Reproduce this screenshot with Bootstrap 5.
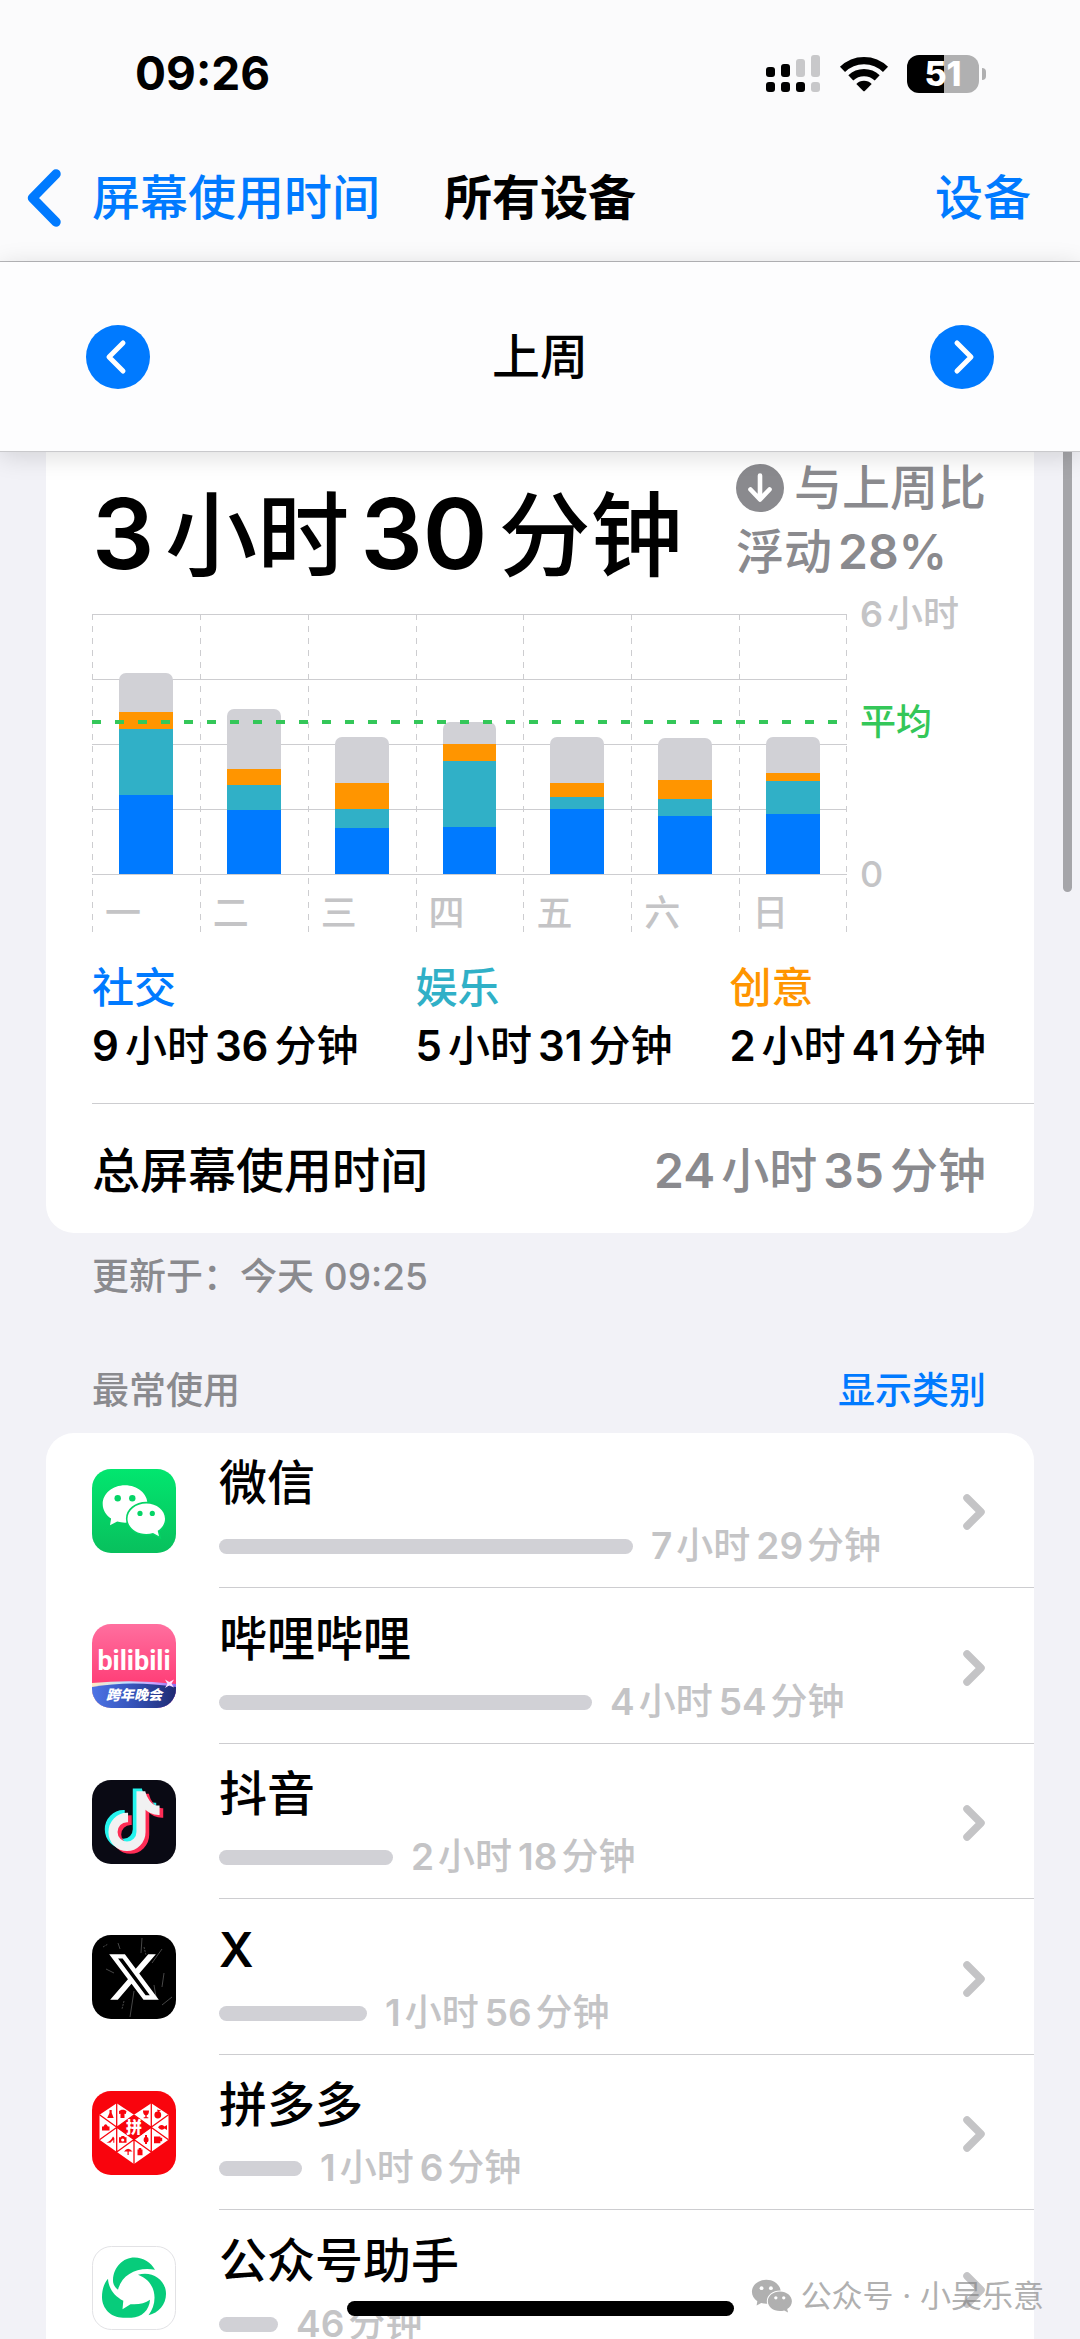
<!DOCTYPE html>
<html lang="zh-CN">

<head>
    <meta charset="UTF-8">
    <meta name="viewport" content="width=device-width, initial-scale=1.0">
    <title>屏幕使用时间</title>
    <link rel="stylesheet" href="https://cdn.jsdelivr.net/npm/bootstrap@5.3.3/dist/css/bootstrap.min.css">
    <script src="https://cdn.jsdelivr.net/npm/bootstrap@5.3.3/dist/js/bootstrap.bundle.min.js"></script>
    <style>
        :root {
            --ios-blue: #007aff;
            --ios-teal: #30b0c7;
            --ios-orange: #ff9500;
            --ios-green: #34c759;
            --ios-gray: #8a8a8e;
            --ios-light: #c4c4c6;
            --ios-fill: #d1d1d6;
            --ios-line: #cdcdd0;
        }

        body {
            background: #f2f2f7;
            color: #000;
            font-family: Inter, "Noto Sans CJK SC", sans-serif;
            font-weight: 500;
        }

        a {
            text-decoration: none;
        }

        svg {
            display: block;
            flex: none;
        }

        .screen {
            height: 100vh;
        }

        .text-ios {
            color: var(--ios-blue);
        }

        .text-gray {
            color: var(--ios-gray);
        }

        /* space between digits and Chinese characters */
        .num {
            margin: 0 6px;
            font-weight: 600;
        }

        .num:first-child {
            margin-left: 0;
        }

        /* header */
        .top-area {
            background: #fbfbfc;
            border-bottom: 1px solid #b8b8bb;
        }

        .status-row {
            padding: 45px 94px 0 135px;
        }

        .clock {
            font-size: 46px;
            line-height: 57px;
            font-weight: 700;
        }

        .wifi {
            margin: 0 18px;
        }

        .battery {
            width: 72px;
            border-radius: 12px;
            background: linear-gradient(to right, #000 37px, #b0b0b1 37px);
            color: #fff;
            font-size: 34px;
            line-height: 38px;
            font-weight: 800;
            text-align: center;
        }

        .battery-tip {
            width: 4px;
            height: 12px;
            margin-left: 3px;
            border-radius: 0 4px 4px 0;
            background: #b0b0b1;
        }

        .nav-row {
            display: grid;
            grid-template-columns: 1fr auto 1fr;
            padding: 64px 49px 31px 27px;
            font-size: 48px;
            line-height: 64px;
        }

        .nav-row h1 {
            font-size: 48px;
            line-height: 64px;
            font-weight: 700;
            margin-right: -22px;
        }

        .back-link {
            gap: 31px;
        }

        .week-row {
            background: #fdfdfe;
            border-bottom: 1px solid #c9c9cc;
            padding: 63px 86px 62px;
            font-size: 48px;
            line-height: 64px;
            box-shadow: 0 4px 24px rgba(0, 0, 0, .14);
        }

        .round-btn {
            width: 64px;
            height: 64px;
            background: var(--ios-blue);
        }

        /* summary card */
        .panel {
            margin: 0 46px;
            background: #fff;
        }

        .summary {
            border-radius: 0 0 28px 28px;
            padding: 4px 0 0 46px;
        }

        .summary-body {
            padding-right: 48px;
        }

        .total {
            font-size: 92px;
            line-height: 96px;
        }

        .total .num {
            font-size: 98px;
            margin: 0 11px;
        }

        .total .num:first-child {
            margin-left: 0;
        }

        .compare {
            font-size: 48px;
            line-height: 64px;
        }

        .compare-head {
            gap: 10px;
        }

        /* chart */
        .chart {
            margin-top: 30px;
            font-size: 36px;
            line-height: 36px;
            color: var(--ios-light);
        }

        .chart .num,
        .usage .num {
            margin-right: 4px;
        }

        .plot {
            background: repeating-linear-gradient(to bottom, var(--ios-line) 0 1px, transparent 1px 65px) 0 0 / 100% 261px no-repeat;
        }

        .day {
            background: repeating-linear-gradient(to bottom, var(--ios-line) 0 6px, transparent 6px 12px) 0 0 / 1px 100% no-repeat;
        }

        .day:last-of-type {
            background: repeating-linear-gradient(to bottom, var(--ios-line) 0 6px, transparent 6px 12px) 0 0 / 1px 100% no-repeat,
                repeating-linear-gradient(to bottom, var(--ios-line) 0 6px, transparent 6px 12px) 100% 0 / 1px 100% no-repeat;
        }

        .bars {
            height: 260px;
        }

        .stack {
            width: 50%;
            border-radius: 7px 7px 0 0;
        }

        .fill-other {
            background: var(--ios-fill);
        }

        .fill-create {
            background: var(--ios-orange);
        }

        .fill-fun {
            background: var(--ios-teal);
        }

        .fill-social {
            background: var(--ios-blue);
        }

        .day-name {
            padding: 21px 0 1px 13px;
        }

        .avg-line {
            position: absolute;
            left: 0;
            right: 0;
            top: 106px;
            height: 4px;
            background: repeating-linear-gradient(to right, var(--ios-green) 0 9px, transparent 9px 23px);
        }

        .axis {
            width: 139px;
            padding-left: 13px;
            margin-top: -18px;
        }

        .axis-avg {
            margin-top: 72px;
            color: var(--ios-green);
        }

        .axis-zero {
            margin-top: 116px;
        }

        .legend-row {
            margin-top: 27px;
            padding-bottom: 28px;
            font-size: 42px;
            line-height: 58px;
        }

        .sum-row {
            border-top: 1px solid var(--ios-line);
            padding: 35px 48px 30px 0;
            font-size: 48px;
            line-height: 64px;
        }

        .caption {
            padding: 0 94px 0 92px;
            font-size: 37px;
            line-height: 48px;
        }

        .updated {
            margin: 20px 0 66px;
        }

        .caption h2 {
            font-size: 37px;
            line-height: 48px;
        }

        /* app list */
        .app-list {
            margin-top: 18px;
            border-radius: 28px 28px 0 0;
        }

        .app-item {
            padding-left: 46px;
            gap: 43px;
            color: #000;
        }

        .app-body {
            border-bottom: 1px solid var(--ios-line);
            padding: 22px 48px 17px 0;
        }

        .app-item:nth-child(even) .app-body {
            padding-top: 23px;
        }

        .app-name {
            font-size: 48px;
            line-height: 56px;
        }

        .usage {
            margin-top: 11px;
            gap: 18px;
            font-size: 37px;
            line-height: 48px;
            color: var(--ios-light);
        }

        .usage-bar {
            height: 15px;
            border-radius: 8px;
            background: var(--ios-fill);
        }

        /* overlays */
        .scroll-thumb {
            position: absolute;
            right: 8px;
            top: 452px;
            width: 9px;
            height: 440px;
            border-radius: 0 0 5px 5px;
            background: #a5a5a9;
        }

        .home-bar {
            position: absolute;
            left: 50%;
            bottom: 23px;
            width: 387px;
            height: 15px;
            margin-left: -193px;
            border-radius: 8px;
            background: #000;
        }

        .watermark {
            position: absolute;
            right: 36px;
            bottom: 23px;
            gap: 8px;
            font-size: 31px;
            line-height: 40px;
            font-weight: 400;
            color: #808080;
            opacity: .62;
        }
    </style>
</head>

<body>
    <div class="screen position-relative overflow-hidden">

        <header class="position-relative z-1">
            <div class="top-area">
                <div class="status-row d-flex align-items-center justify-content-between">
                    <span class="clock">09:26</span>
                    <div class="d-flex align-items-center">
                        <svg width="55" height="37" viewBox="0 0 55 37">
                            <rect x="0" y="12" width="9" height="10" rx="3" />
                            <rect x="15" y="9" width="9" height="13" rx="3" />
                            <rect x="30" y="4" width="9" height="18" rx="3" fill="#c8c8ca" />
                            <rect x="45" y="0" width="9" height="22" rx="3" fill="#c8c8ca" />
                            <rect x="0" y="27" width="9" height="10" rx="3" />
                            <rect x="15" y="27" width="9" height="10" rx="3" />
                            <rect x="30" y="27" width="9" height="10" rx="3" />
                            <rect x="45" y="27" width="9" height="10" rx="3" fill="#c8c8ca" />
                        </svg>
                        <svg class="wifi" width="50" height="36" viewBox="0 0 50 36">
                            <g fill="none" stroke="#000" stroke-width="7.200">
                                <path d="M3.500 13.400A30.500 30.500 0 0 1 46.500 13.400" />
                                <path d="M11.800 21.800A19.200 19.200 0 0 1 38.200 21.800" />
                            </g>
                            <path d="M17.300 28A10.900 10.900 0 0 1 32.700 28L26 34.800Q25 35.800 24 34.800Z" />
                        </svg>
                        <div class="battery">51</div>
                        <div class="battery-tip"></div>
                    </div>
                </div>
                <nav class="nav-row align-items-center">
                    <a href="#" class="back-link text-ios d-flex align-items-center">
                        <svg width="34" height="58" viewBox="0 0 34 58">
                            <path d="M29 5L5.500 29L29 53" fill="none" stroke="#007aff" stroke-width="9.500" stroke-linecap="round" stroke-linejoin="round" />
                        </svg>
                        <span class="text-nowrap">屏幕使用时间</span>
                    </a>
                    <h1 class="mb-0">所有设备</h1>
                    <a href="#" class="text-ios text-end">设备</a>
                </nav>
            </div>
            <div class="week-row d-flex justify-content-between align-items-center">
                <button type="button" class="round-btn btn p-0 border-0 rounded-circle" aria-label="上一周">
                    <svg width="64" height="64" viewBox="0 0 64 64">
                        <path d="M37 18L23 32L37 46" fill="none" stroke="#fff" stroke-width="5" stroke-linecap="round" stroke-linejoin="round" />
                    </svg>
                </button>
                <span>上周</span>
                <button type="button" class="round-btn btn p-0 border-0 rounded-circle" aria-label="下一周">
                    <svg width="64" height="64" viewBox="0 0 64 64">
                        <path d="M27 18L41 32L27 46" fill="none" stroke="#fff" stroke-width="5" stroke-linecap="round" stroke-linejoin="round" />
                    </svg>
                </button>
            </div>
        </header>

        <main>
            <section class="panel summary">
                <div class="summary-body">
                    <div class="d-flex justify-content-between align-items-end">
                        <div class="total text-nowrap"><span class="num">3</span>小时<span class="num">30</span>分钟</div>
                        <div class="compare text-gray text-nowrap">
                            <div class="compare-head d-flex align-items-center">
                                <svg width="48" height="48" viewBox="0 0 48 48">
                                    <circle cx="24" cy="24" r="24" fill="#8a8a8e" />
                                    <path d="M24 11.500V34M14.500 25.500L24 35.500L33.500 25.500" fill="none" stroke="#fff" stroke-width="4.600" stroke-linecap="round" stroke-linejoin="round" />
                                </svg>
                                <span>与上周比</span>
                            </div>
                            <div><span>浮动</span><span class="num">28%</span></div>
                        </div>
                    </div>

                    <div class="chart d-flex">
                        <div class="plot position-relative flex-grow-1 d-flex">
                            <div class="day flex-fill">
                                <div class="bars d-flex align-items-end justify-content-center">
                                    <div class="stack overflow-hidden">
                                        <div class="fill-other" style="height: 39px"></div>
                                        <div class="fill-create" style="height: 17px"></div>
                                        <div class="fill-fun" style="height: 66px"></div>
                                        <div class="fill-social" style="height: 79px"></div>
                                    </div>
                                </div>
                                <div class="day-name">一</div>
                            </div>
                            <div class="day flex-fill">
                                <div class="bars d-flex align-items-end justify-content-center">
                                    <div class="stack overflow-hidden">
                                        <div class="fill-other" style="height: 60px"></div>
                                        <div class="fill-create" style="height: 16px"></div>
                                        <div class="fill-fun" style="height: 25px"></div>
                                        <div class="fill-social" style="height: 64px"></div>
                                    </div>
                                </div>
                                <div class="day-name">二</div>
                            </div>
                            <div class="day flex-fill">
                                <div class="bars d-flex align-items-end justify-content-center">
                                    <div class="stack overflow-hidden">
                                        <div class="fill-other" style="height: 46px"></div>
                                        <div class="fill-create" style="height: 26px"></div>
                                        <div class="fill-fun" style="height: 19px"></div>
                                        <div class="fill-social" style="height: 46px"></div>
                                    </div>
                                </div>
                                <div class="day-name">三</div>
                            </div>
                            <div class="day flex-fill">
                                <div class="bars d-flex align-items-end justify-content-center">
                                    <div class="stack overflow-hidden">
                                        <div class="fill-other" style="height: 22px"></div>
                                        <div class="fill-create" style="height: 17px"></div>
                                        <div class="fill-fun" style="height: 66px"></div>
                                        <div class="fill-social" style="height: 47px"></div>
                                    </div>
                                </div>
                                <div class="day-name">四</div>
                            </div>
                            <div class="day flex-fill">
                                <div class="bars d-flex align-items-end justify-content-center">
                                    <div class="stack overflow-hidden">
                                        <div class="fill-other" style="height: 46px"></div>
                                        <div class="fill-create" style="height: 14px"></div>
                                        <div class="fill-fun" style="height: 12px"></div>
                                        <div class="fill-social" style="height: 65px"></div>
                                    </div>
                                </div>
                                <div class="day-name">五</div>
                            </div>
                            <div class="day flex-fill">
                                <div class="bars d-flex align-items-end justify-content-center">
                                    <div class="stack overflow-hidden">
                                        <div class="fill-other" style="height: 42px"></div>
                                        <div class="fill-create" style="height: 19px"></div>
                                        <div class="fill-fun" style="height: 17px"></div>
                                        <div class="fill-social" style="height: 58px"></div>
                                    </div>
                                </div>
                                <div class="day-name">六</div>
                            </div>
                            <div class="day flex-fill">
                                <div class="bars d-flex align-items-end justify-content-center">
                                    <div class="stack overflow-hidden">
                                        <div class="fill-other" style="height: 36px"></div>
                                        <div class="fill-create" style="height: 8px"></div>
                                        <div class="fill-fun" style="height: 33px"></div>
                                        <div class="fill-social" style="height: 60px"></div>
                                    </div>
                                </div>
                                <div class="day-name">日</div>
                            </div>
                            <span class="avg-line"></span>
                        </div>
                        <div class="axis text-nowrap">
                            <div><span class="num">6</span>小时</div>
                            <div class="axis-avg">平均</div>
                            <div class="axis-zero">0</div>
                        </div>
                    </div>

                    <div class="legend-row d-flex justify-content-between text-nowrap">
                        <div>
                            <div style="color: var(--ios-blue)">社交</div>
                            <div><span class="num">9</span>小时<span class="num">36</span>分钟</div>
                        </div>
                        <div>
                            <div style="color: var(--ios-teal)">娱乐</div>
                            <div><span class="num">5</span>小时<span class="num">31</span>分钟</div>
                        </div>
                        <div>
                            <div style="color: var(--ios-orange)">创意</div>
                            <div><span class="num">2</span>小时<span class="num">41</span>分钟</div>
                        </div>
                    </div>
                </div>
                <div class="sum-row d-flex justify-content-between">
                    <span>总屏幕使用时间</span>
                    <span class="text-gray"><span class="num">24</span>小时<span class="num">35</span>分钟</span>
                </div>
            </section>

            <div class="caption text-gray">
                <p class="updated">更新于：今天 09:25</p>
                <div class="d-flex justify-content-between">
                    <h2 class="mb-0">最常使用</h2>
                    <a href="#" class="text-ios">显示类别</a>
                </div>
            </div>

            <section class="panel app-list">
                <a href="#" class="app-item d-flex align-items-center">
                    <svg width="84" height="84" viewBox="0 0 84 84">
                        <defs>
                            <linearGradient id="wechatBg" x1="0" y1="0" x2="0" y2="1">
                                <stop offset="0" stop-color="#02e66f" />
                                <stop offset="1" stop-color="#08c05d" />
                            </linearGradient>
                        </defs>
                        <rect width="84" height="84" rx="19" fill="url(#wechatBg)" />
                        <path d="M33 16.300C20.500 16.300 10.700 24.600 10.700 35C10.700 41 13.900 46.200 19.100 49.600L18 56.300L25.200 52.600C27.700 53.400 30.300 53.700 33 53.700C45.500 53.700 55.500 45.400 55.500 35S45.500 16.300 33 16.300Z" fill="#fff" />
                        <path d="M54.300 34.400C43.900 34.400 35.500 41.200 35.500 49.700S43.900 65 54.300 65C56.700 65 58.900 64.700 61 64L67 67.200L65.700 61.800C70.200 59.100 73 54.700 73 49.700C73 41.200 64.700 34.400 54.300 34.400Z" fill="#fff" stroke="#05d466" stroke-width="3.200" paint-order="stroke" />
                        <g fill="#05d466">
                            <circle cx="25.700" cy="29.300" r="3.200" />
                            <circle cx="40.300" cy="29.300" r="3.200" />
                            <circle cx="48" cy="44.400" r="2.600" />
                            <circle cx="60.300" cy="44.400" r="2.600" />
                        </g>
                    </svg>
                    <div class="app-body flex-grow-1 d-flex justify-content-between align-items-center">
                        <div>
                            <div class="app-name">微信</div>
                            <div class="usage d-flex align-items-center">
                                <div class="usage-bar" style="width: 414px"></div>
                                <span><span class="num">7</span>小时<span class="num">29</span>分钟</span>
                            </div>
                        </div>
                        <svg width="24" height="38" viewBox="0 0 24 38">
                            <path d="M5 4L19 18L5 32" fill="none" stroke="#c4c4c6" stroke-width="7.500" stroke-linecap="round" stroke-linejoin="round" />
                        </svg>
                    </div>
                </a>

                <a href="#" class="app-item d-flex align-items-center">
                    <svg width="84" height="84" viewBox="0 0 84 84">
                        <defs>
                            <linearGradient id="biliBg" x1="0" y1="0" x2="0" y2="1">
                                <stop offset="0" stop-color="#ff6f9f" />
                                <stop offset=".7" stop-color="#ff3f78" />
                            </linearGradient>
                            <linearGradient id="biliBand" x1="0" y1="0" x2="1" y2="0">
                                <stop offset="0" stop-color="#4d74e6" />
                                <stop offset=".5" stop-color="#3452b8" />
                                <stop offset="1" stop-color="#1f2a72" />
                            </linearGradient>
                            <linearGradient id="biliRim" x1="0" y1="0" x2="1" y2="0">
                                <stop offset="0" stop-color="#ffe9c4" />
                                <stop offset=".4" stop-color="#bfe0ff" />
                                <stop offset=".75" stop-color="#c9a0ff" />
                                <stop offset="1" stop-color="#8a6cf0" />
                            </linearGradient>
                            <clipPath id="biliClip">
                                <rect width="84" height="84" rx="19" />
                            </clipPath>
                        </defs>
                        <g clip-path="url(#biliClip)">
                            <rect width="84" height="84" fill="url(#biliBg)" />
                            <path d="M0 59Q42 55 84 60V84H0Z" fill="url(#biliRim)" />
                            <path d="M0 63Q40 56 84 63V84H0Z" fill="url(#biliBand)" />
                            <path d="M73 55.500L77.300 58L82 55.500L79.500 59.700L82 63.500L77.500 61.300L73 64L75.400 59.700Z" fill="#ffe3ff" />
                        </g>
                        <text x="42" y="46" text-anchor="middle" font-family="Roboto, sans-serif" font-size="27" font-weight="700" fill="#fff">bilibili</text>
                        <text x="42" y="76" text-anchor="middle" font-family="Noto Sans CJK SC, sans-serif" font-size="14" font-weight="900" font-style="italic" fill="#fff">跨年晚会</text>
                    </svg>
                    <div class="app-body flex-grow-1 d-flex justify-content-between align-items-center">
                        <div>
                            <div class="app-name">哔哩哔哩</div>
                            <div class="usage d-flex align-items-center">
                                <div class="usage-bar" style="width: 373px"></div>
                                <span><span class="num">4</span>小时<span class="num">54</span>分钟</span>
                            </div>
                        </div>
                        <svg width="24" height="38" viewBox="0 0 24 38">
                            <path d="M5 4L19 18L5 32" fill="none" stroke="#c4c4c6" stroke-width="7.500" stroke-linecap="round" stroke-linejoin="round" />
                        </svg>
                    </div>
                </a>

                <a href="#" class="app-item d-flex align-items-center">
                    <svg width="84" height="84" viewBox="0 0 84 84">
                        <defs>
                            <path id="note" d="M9 0h1.980c.144.715.540 1.617 1.235 2.512C12.895 3.389 13.797 4 15 4v2c-1.753 0-3.070-.814-4-1.829V11a5 5 0 1 1-5-5v2a3 3 0 1 0 3 3V0Z" />
                        </defs>
                        <rect width="84" height="84" rx="19" fill="#0a0a14" />
                        <use href="#note" transform="translate(10.500 9.700) scale(3.500 3.600)" fill="#25f4ee" stroke="#25f4ee" stroke-width=".7" />
                        <use href="#note" transform="translate(17.500 15) scale(3.500 3.600)" fill="#fe2c55" stroke="#fe2c55" stroke-width=".7" />
                        <use href="#note" transform="translate(14 12.300) scale(3.500 3.600)" fill="#f1f1f2" stroke="#f1f1f2" stroke-width=".6" />
                    </svg>
                    <div class="app-body flex-grow-1 d-flex justify-content-between align-items-center">
                        <div>
                            <div class="app-name">抖音</div>
                            <div class="usage d-flex align-items-center">
                                <div class="usage-bar" style="width: 174px"></div>
                                <span><span class="num">2</span>小时<span class="num">18</span>分钟</span>
                            </div>
                        </div>
                        <svg width="24" height="38" viewBox="0 0 24 38">
                            <path d="M5 4L19 18L5 32" fill="none" stroke="#c4c4c6" stroke-width="7.500" stroke-linecap="round" stroke-linejoin="round" />
                        </svg>
                    </div>
                </a>

                <a href="#" class="app-item d-flex align-items-center">
                    <svg width="84" height="84" viewBox="0 0 84 84">
                        <rect width="84" height="84" rx="19" fill="#000" />
                        <g stroke="#fff" fill="none" stroke-width=".8" opacity=".35">
                            <path d="M42 56L38 82M50 3L49 18M26 8L28 14M70 14L60 28M14 34L22 38M72 38L70 52M62 50L64 62M80 62L70 70" />
                            <path d="M11 12L16 9M52 12L54 20M32 66L30 74" stroke-dasharray="2 1" />
                        </g>
                        <path transform="translate(17.200 16.800) scale(3.100 3.150)" fill="#fff" d="M12.600.750h2.454l-5.360 6.142L16 15.250h-4.937l-3.867-5.070-4.425 5.070H.316l5.733-6.570L0 .750h5.063l3.495 4.633L12.601.750Zm-.860 13.028h1.360L4.323 2.145H2.865z" />
                    </svg>
                    <div class="app-body flex-grow-1 d-flex justify-content-between align-items-center">
                        <div>
                            <div class="app-name fw-semibold">X</div>
                            <div class="usage d-flex align-items-center">
                                <div class="usage-bar" style="width: 148px"></div>
                                <span><span class="num">1</span>小时<span class="num">56</span>分钟</span>
                            </div>
                        </div>
                        <svg width="24" height="38" viewBox="0 0 24 38">
                            <path d="M5 4L19 18L5 32" fill="none" stroke="#c4c4c6" stroke-width="7.500" stroke-linecap="round" stroke-linejoin="round" />
                        </svg>
                    </div>
                </a>

                <a href="#" class="app-item d-flex align-items-center">
                    <svg width="84" height="84" viewBox="0 0 84 84">
                        <rect width="84" height="84" rx="19" fill="#f9040d" />
                        <path d="M24.700 12.300L42 23.700L59.300 12.300L76.500 23.700V48.700L42 73L7.500 48.700V23.700Z" fill="#fff" />
                        <path d="M24.700 36.300L42 24.300L59.300 36.300L42 48.700Z" fill="#f9040d" />
                        <path d="M24.700 12V61M59.300 12V61M42 48.700V73M7.500 23.700L59.300 61M7.500 48.700L42 24M76.500 23.700L24.700 61M76.500 48.700L42 24" fill="none" stroke="#f9040d" stroke-width="1.300" />
                        <rect x="34" y="29" width="16" height="15" fill="#f9040d" />
                        <g fill="#f9040d">
                            <path d="M17.500 19h2.200v3l2 5h-6.500l2.300-5Z" />
                            <path d="M27 20l2.500-1.200h2.400L34.500 20l-.7 3-1.300-.3V27h-4v-4.300l-1.400.3Z" />
                            <path d="M51 19.500h6q0 4-2.300 4.700v2h1.600v1.100h-4.600v-1.100h1.600v-2Q51 23.500 51 19.500Z" />
                            <circle cx="65.800" cy="24" r="3.400" />
                            <path d="M65 18.500l4 1-3 2Z" />
                            <path d="M10 35.500h1.500q2.200-4.500 4.400 0h1.600v4H10Z" />
                            <path d="M66 36.300q3-4 6.500-.8l2.500-1.500v5l-2.500-1.500q-3.500 3-6.500-1.200Z" />
                            <path d="M14.500 51.500q4-1 6.500-6l1.300 1.500v4.800h-1v-3l-3 3Z" />
                            <path d="M27 46.200h1.800l.8-1.300h2.500l.8 1.300h1.600v5.600H27Z" />
                            <rect x="51.700" y="46" width="4.800" height="5.500" rx="2" />
                            <path d="M53 44h2v9h-2Z" />
                            <path d="M62 45.500h6.400v1.200h1.800v3.500h-1.800v2H62Z" />
                            <path d="M32 60.500q4-5.500 8.500 0h-3.800v3.600h-1.200v-3.600Z" />
                            <path d="M46.700 57h2.600v1.500h1.200v5.700h-5v-5.700h1.200Z" />
                        </g>
                        <circle cx="30.700" cy="49" r="1.600" fill="#fff" />
                        <text x="42" y="42" text-anchor="middle" font-family="Noto Sans CJK SC, sans-serif" font-size="16" font-weight="900" fill="#fff">拼</text>
                    </svg>
                    <div class="app-body flex-grow-1 d-flex justify-content-between align-items-center">
                        <div>
                            <div class="app-name">拼多多</div>
                            <div class="usage d-flex align-items-center">
                                <div class="usage-bar" style="width: 83px"></div>
                                <span><span class="num">1</span>小时<span class="num">6</span>分钟</span>
                            </div>
                        </div>
                        <svg width="24" height="38" viewBox="0 0 24 38">
                            <path d="M5 4L19 18L5 32" fill="none" stroke="#c4c4c6" stroke-width="7.500" stroke-linecap="round" stroke-linejoin="round" />
                        </svg>
                    </div>
                </a>

                <a href="#" class="app-item d-flex align-items-center">
                    <svg width="84" height="84" viewBox="0 0 84 84">
                        <rect x=".5" y=".5" width="83" height="83" rx="19" fill="#fff" stroke="#e2e2e5" />
                        <g fill="#07cc7b">
                            <path d="M21 34C21.500 21 31 11.500 42.500 11.500C51.500 11.500 59 16.500 63 23.800C46 20.500 30 28 26 43.800C22.500 41 20.800 38 21 34Z" />
                            <path d="M46 28.700C60 24.500 74 33.500 74 48C74 58.500 66.500 67 56.500 69.200C66 57 65.500 36 46 28.700Z" />
                            <path d="M16 32.800C16.500 42 22 50 31.300 54.800L30.500 63.300L38.500 58.200C46.500 58.800 53 57.500 58 53.800C57.500 64 49.500 71.700 39.500 71.700H31C19 71.700 10 62.500 10 51C10 43.500 12 37.500 16 32.800Z" />
                        </g>
                    </svg>
                    <div class="app-body flex-grow-1 d-flex justify-content-between align-items-center">
                        <div>
                            <div class="app-name">公众号助手</div>
                            <div class="usage d-flex align-items-center">
                                <div class="usage-bar" style="width: 59px"></div>
                                <span><span class="num">46</span>分钟</span>
                            </div>
                        </div>
                        <svg width="24" height="38" viewBox="0 0 24 38">
                            <path d="M5 4L19 18L5 32" fill="none" stroke="#c4c4c6" stroke-width="7.500" stroke-linecap="round" stroke-linejoin="round" />
                        </svg>
                    </div>
                </a>
            </section>
        </main>

        <div class="scroll-thumb"></div>
        <div class="home-bar"></div>
        <div class="watermark d-flex align-items-center">
            <svg width="42" height="34" viewBox="10 15 64 53">
                <path d="M33 16.300C20.500 16.300 10.700 24.600 10.700 35C10.700 41 13.900 46.200 19.100 49.600L18 56.300L25.200 52.600C27.700 53.400 30.300 53.700 33 53.700C45.500 53.700 55.500 45.400 55.500 35S45.500 16.300 33 16.300Z" fill="#808080" />
                <path d="M54.300 34.400C43.900 34.400 35.500 41.200 35.500 49.700S43.900 65 54.300 65C56.700 65 58.900 64.700 61 64L67 67.200L65.700 61.800C70.200 59.100 73 54.700 73 49.700C73 41.200 64.700 34.400 54.300 34.400Z" fill="#808080" stroke="#fff" stroke-width="3.200" paint-order="stroke" />
                <g fill="#fff">
                    <circle cx="25.700" cy="29.300" r="3" />
                    <circle cx="40.300" cy="29.300" r="3" />
                    <circle cx="48" cy="44.400" r="2.600" />
                    <circle cx="60.300" cy="44.400" r="2.600" />
                </g>
            </svg>
            <span>公众号 · 小吴乐意</span>
        </div>
    </div>
</body>

</html>
